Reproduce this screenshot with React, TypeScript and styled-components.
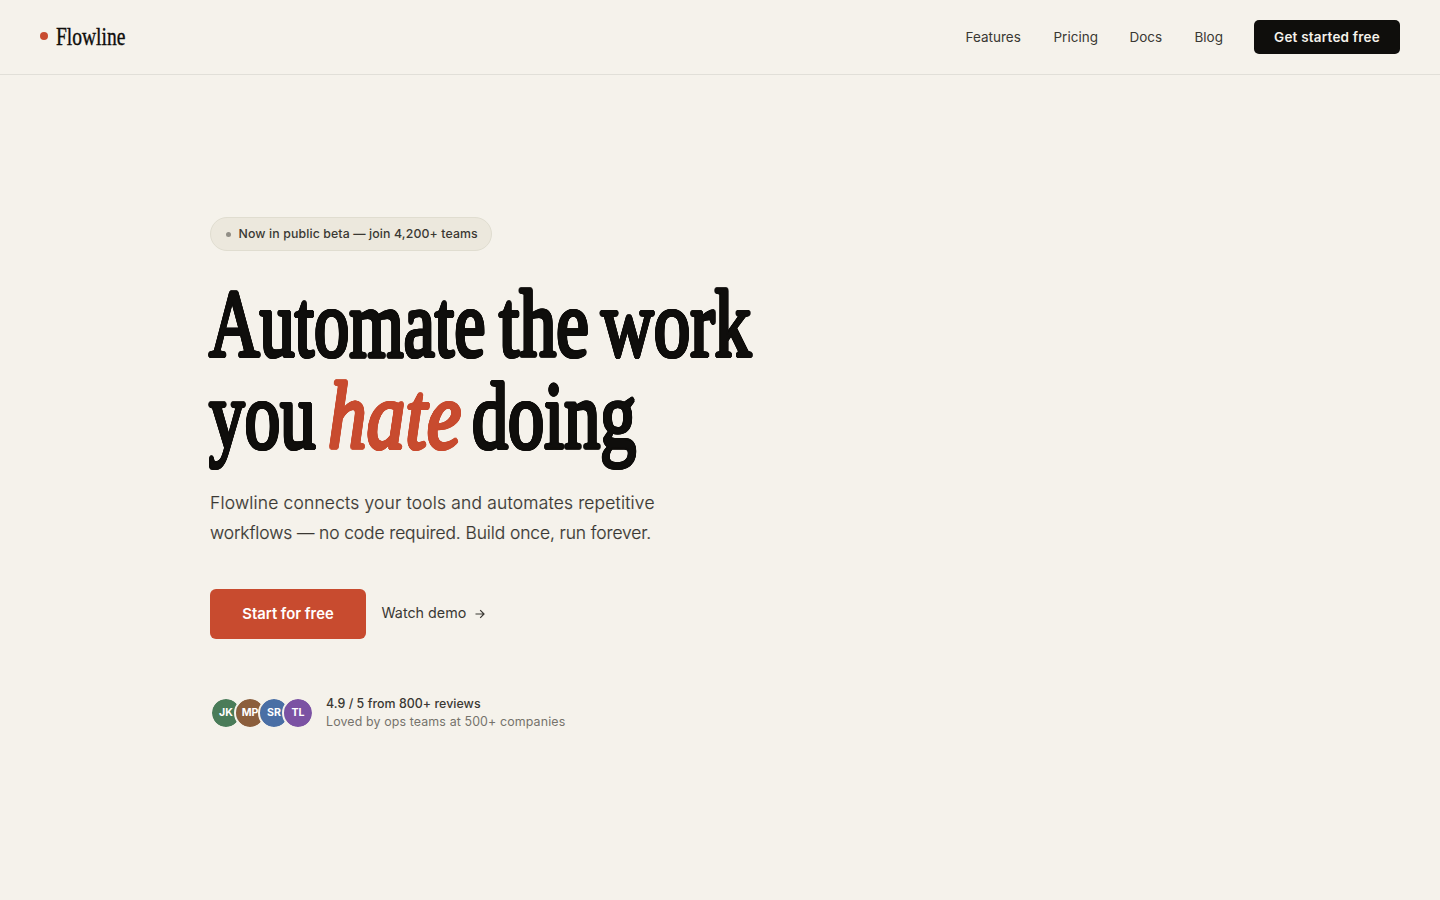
import React from "react";
import styled, { createGlobalStyle } from "styled-components";

const GlobalStyle = createGlobalStyle`
  *, *::before, *::after { box-sizing: border-box; }
  body {
    margin: 0;
    background: #f5f2eb;
    color: #0f0e0c;
    font-family: Inter, "Liberation Sans", sans-serif;
    -webkit-font-smoothing: antialiased;
  }
  a { color: inherit; text-decoration: none; }
`;

const Page = styled.div`
  min-height: 900px;
  display: flex;
  flex-direction: column;
`;

const Nav = styled.nav`
  height: 75px;
  padding: 0 40px;
  display: flex;
  align-items: center;
  justify-content: space-between;
  border-bottom: 1px solid #e1dfd8;
`;

const Logo = styled.a`
  display: flex;
  align-items: center;
  gap: 8px;
  height: 28px;
  margin-bottom: 2px;
`;

const LogoDot = styled.span`
  width: 8px;
  height: 8px;
  border-radius: 50%;
  background: #c84b2f;
`;

const LogoName = styled.span`
  width: 70px;
  padding-top: 2px;
  font: 400 26px/28px "Liberation Serif", serif;
  transform: scaleX(0.75);
  transform-origin: left;
  white-space: nowrap;
  -webkit-text-stroke: 0.4px currentColor;
`;

const NavLinks = styled.div`
  display: flex;
  align-items: center;
  gap: 32px;
`;

const NavLink = styled.a<{ $width: number }>`
  width: ${(p) => p.$width}px;
  font-size: 13.5px;
  line-height: 20px;
  color: #3a3833;
  white-space: nowrap;
`;

const NavButton = styled.button`
  width: 146px;
  height: 34px;
  padding: 0;
  border: 0;
  border-radius: 5px;
  background: #0f0e0c;
  color: #f5f2eb;
  font: 600 13.5px/20px Inter, sans-serif;
  letter-spacing: 0.2px;
  white-space: nowrap;
`;

const Hero = styled.main`
  padding: 142px 210px 0;
  display: flex;
  flex-direction: column;
  align-items: flex-start;
`;

const Badge = styled.div`
  width: 282px;
  height: 34px;
  padding: 0 0 1px 14px;
  display: flex;
  align-items: center;
  gap: 8px;
  border: 1px solid #e0ddd0;
  border-radius: 17px;
  background: #ece8dd;
  color: #3a3833;
  font-size: 12.3px;
  font-weight: 500;
  letter-spacing: 0.13px;
  white-space: nowrap;
`;

const BadgeDot = styled.span`
  width: 5px;
  height: 5px;
  margin: 1px 0 0 0.5px;
  border-radius: 50%;
  background: #918e86;
`;

// Thickens the display face evenly on all sides, keeping its corners round.
const roundedWeight = (radius: number) =>
  Array.from({ length: 16 }, (_, i) => {
    const a = (i * Math.PI) / 8;
    return `${(Math.cos(a) * radius).toFixed(2)}px ${(Math.sin(a) * radius).toFixed(2)}px 0 currentColor`;
  }).join(", ");

const Title = styled.h1`
  margin: 27px 0 0 -1px;
  font: 400 95.5px/92.4px "Liberation Serif", serif;
  text-shadow: ${roundedWeight(1.9)};
`;

const TitleLine = styled.span`
  display: flex;
  gap: 12px;
`;

const Word = styled.span<{ $width: number; $scale: number }>`
  display: block;
  width: ${(p) => p.$width}px;
  white-space: nowrap;
  transform: scaleX(${(p) => p.$scale});
  transform-origin: left;
`;

const Accent = styled(Word)`
  color: #c84b2f;
  font-style: italic;
`;

const Lead = styled.p`
  margin: 25px 0 0;
  font-size: 17.4px;
  font-weight: 300;
  line-height: 30px;
  color: #3a3833;
  -webkit-text-stroke: 0.2px currentColor;
  white-space: nowrap;
`;

const LeadLine = styled.span<{ $spacing: number }>`
  display: block;
  letter-spacing: ${(p) => p.$spacing}px;
`;

const Actions = styled.div`
  margin-top: 41px;
  display: flex;
  align-items: center;
  gap: 15.5px;
`;

const PrimaryButton = styled.button`
  width: 156px;
  height: 50px;
  padding: 0;
  border: 0;
  border-radius: 6px;
  background: #c84b2f;
  color: #fff;
  font: 600 14.8px/20px Inter, sans-serif;
  white-space: nowrap;
`;

const DemoLink = styled.a`
  display: flex;
  align-items: center;
  gap: 8px;
  margin-top: -1px;
  font-size: 14.3px;
  line-height: 20px;
  color: #3a3833;

  svg { margin-top: 2px; }
`;

const DemoText = styled.span`
  width: 85px;
  white-space: nowrap;
`;

const Proof = styled.div`
  margin-top: 56px;
  display: flex;
  align-items: center;
  gap: 12px;
`;

const Avatars = styled.div`
  display: flex;
  padding-top: 1px;
`;

const Avatar = styled.span<{ $color: string }>`
  width: 32px;
  height: 32px;
  padding-bottom: 1px;
  display: flex;
  align-items: center;
  justify-content: center;
  border: 2px solid #f5f2eb;
  border-radius: 50%;
  background: ${(p) => p.$color};
  background-clip: padding-box;
  color: #fff;
  font-size: 10.6px;
  font-weight: 700;

  & + & { margin-left: -8px; }
`;

const ProofText = styled.div`
  font-size: 12.4px;
  line-height: 18px;
  letter-spacing: 0.13px;
  color: #76736b;
  white-space: nowrap;
`;

const Rating = styled.div`
  font-weight: 500;
  letter-spacing: 0.04px;
  color: #3a3833;
`;

const links = [
  { label: "Features", width: 56 },
  { label: "Pricing", width: 44 },
  { label: "Docs", width: 33 },
  { label: "Blog", width: 27.5 },
];

const people = [
  { initials: "JK", color: "#4a7c59" },
  { initials: "MP", color: "#8b5e3c" },
  { initials: "SR", color: "#4a6fa5" },
  { initials: "TL", color: "#7b52a3" },
];

export default function App() {
  return (
    <Page>
      <GlobalStyle />
      <Nav>
        <Logo href="#">
          <LogoDot />
          <LogoName>Flowline</LogoName>
        </Logo>
        <NavLinks>
          {links.map((l) => (
            <NavLink key={l.label} href="#" $width={l.width}>{l.label}</NavLink>
          ))}
          <NavButton>Get started free</NavButton>
        </NavLinks>
      </Nav>
      <Hero>
        <Badge><BadgeDot />Now in public beta — join 4,200+ teams</Badge>
        <Title>
          <TitleLine>
            <Word $width={278} $scale={0.734}>Automate</Word>
            <Word $width={90} $scale={0.77}>the</Word>
            <Word $width={152} $scale={0.765}>work</Word>
          </TitleLine>
          <TitleLine>
            <Word $width={107} $scale={0.745}>you</Word>
            <Accent $width={132} $scale={0.81}>hate</Accent>
            <Word $width={166} $scale={0.755}>doing</Word>
          </TitleLine>
        </Title>
        <Lead>
          <LeadLine $spacing={0.2}>Flowline connects your tools and automates repetitive</LeadLine>
          <LeadLine $spacing={-0.09}>workflows — no code required. Build once, run forever.</LeadLine>
        </Lead>
        <Actions>
          <PrimaryButton>Start for free</PrimaryButton>
          <DemoLink href="#">
            <DemoText>Watch demo</DemoText>
            <svg width="10" height="10" viewBox="0 0 10 10" fill="none" stroke="currentColor" strokeWidth="1.2">
              <path d="M0.5 5H9M5.2 1.2 9 5 5.2 8.8" />
            </svg>
          </DemoLink>
        </Actions>
        <Proof>
          <Avatars>
            {people.map((p) => (
              <Avatar key={p.initials} $color={p.color}>{p.initials}</Avatar>
            ))}
          </Avatars>
          <ProofText>
            <Rating>4.9 / 5 from 800+ reviews</Rating>
            <div>Loved by ops teams at 500+ companies</div>
          </ProofText>
        </Proof>
      </Hero>
    </Page>
  );
}
